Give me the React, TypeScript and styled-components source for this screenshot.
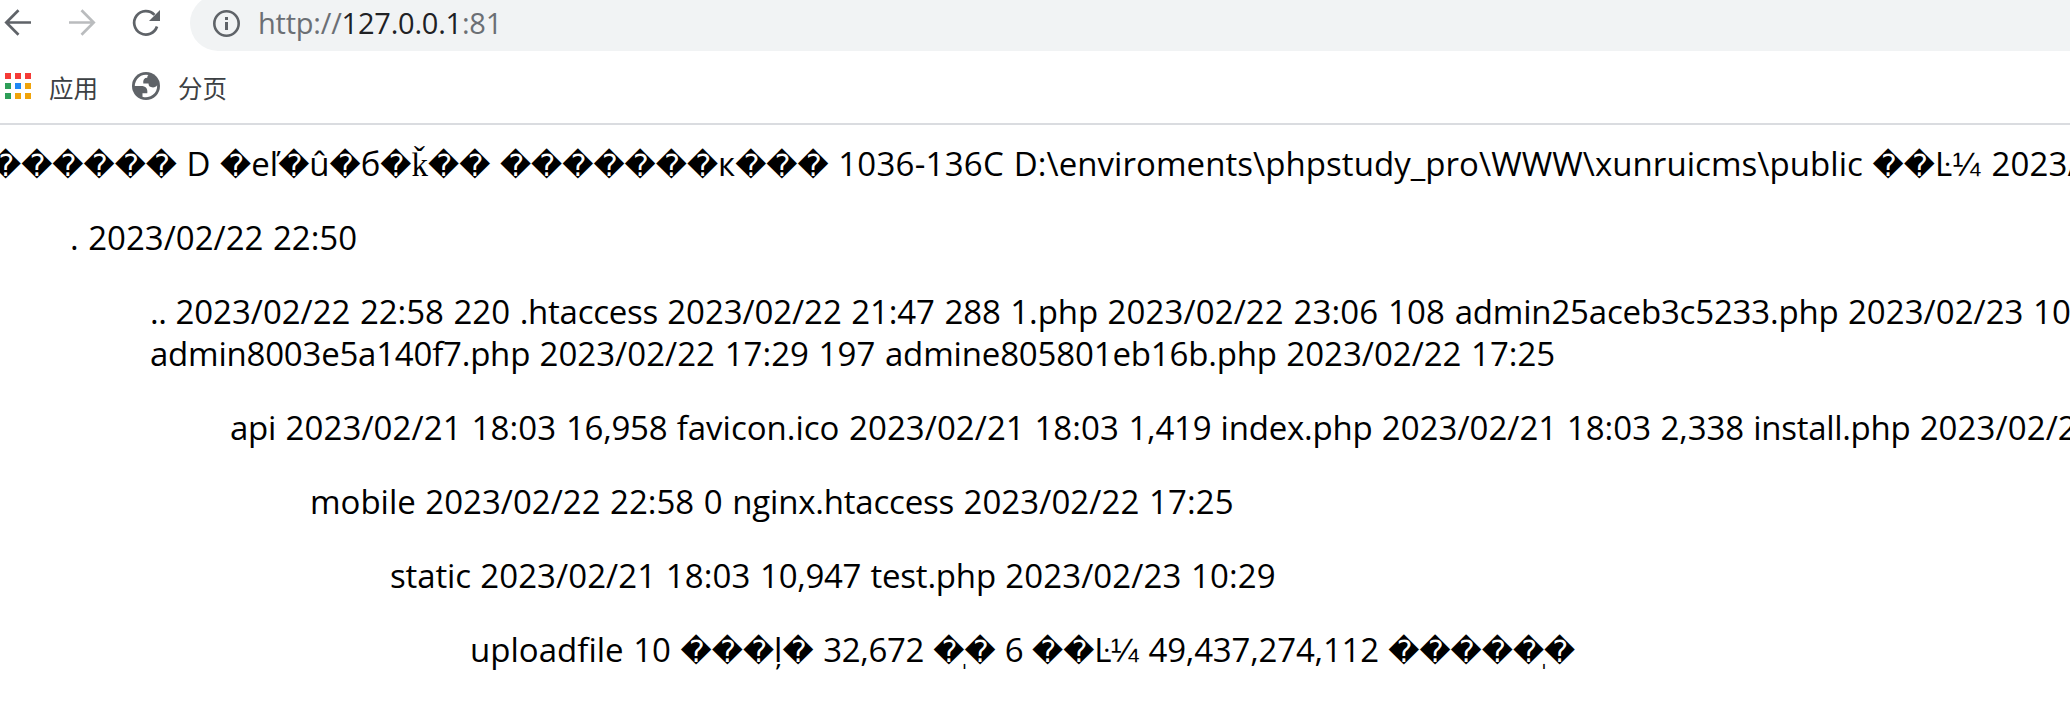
import React from "react";
import styled, { createGlobalStyle } from "styled-components";

const GlobalStyle = createGlobalStyle`
  body { margin: 0; background: #fff; overflow: hidden; }
`;

const Window = styled.div`
  width: 100vw;
  height: 723px;
  overflow: hidden;
  background: #fff;
  font-family: "Open Sans", "Noto Sans CJK SC", sans-serif;
`;

const Toolbar = styled.header`
  display: flex;
  align-items: flex-start;
  height: 51px;
`;

const NavButtons = styled.div`
  display: flex;
  flex: 0 0 190px;
  height: 51px;
`;

const Icon = styled.svg`
  display: block;
  flex: none;
  overflow: visible;
`;

const AddressBar = styled.div`
  display: flex;
  align-items: center;
  flex: 1;
  height: 56px;
  margin-top: -5px;
  box-sizing: border-box;
  padding-left: 23px;
  border-radius: 28px 0 0 28px;
  background: #f1f3f4;
`;

const Url = styled.span`
  margin-left: 18px;
  font-size: 29px;
  line-height: 40px;
  letter-spacing: -0.22px;
  color: #6b6f74;
  white-space: nowrap;
`;

const Host = styled.span`
  color: #202124;
`;

const Bookmarks = styled.nav`
  display: flex;
  align-items: center;
  box-sizing: border-box;
  height: 74px;
  padding: 0 0 2px 5px;
  border-bottom: 2px solid #dadce0;
`;

const Bookmark = styled.div`
  display: flex;
  align-items: center;
  gap: 18px;
  margin-right: 34px;
`;

const BookmarkLabel = styled.span`
  padding-top: 3px;
  font-family: "Noto Sans CJK SC", sans-serif;
  font-size: 24.5px;
  line-height: 36px;
  color: #3c4043;
`;

const Listing = styled.main`
  margin: 18px 0 0 -10px;
  font-size: 33px;
  line-height: 42px;
  word-spacing: 1px;
  color: #000;
  white-space: nowrap;
`;

const Entry = styled.div<{ $level: number }>`
  margin: 0 0 32px ${(p) => p.$level * 80}px;
`;

const Line = styled.div`
  height: 42px;
`;

const Run = styled.span<{ $track: number }>`
  letter-spacing: ${(p) => p.$track}px;
`;

const Unknown = styled.span`
  font-family: "DejaVu Sans", sans-serif;
  font-size: 30.4px;
  line-height: 1;
  letter-spacing: 0;
`;

const Serif = styled.span`
  font-family: "Liberation Serif", serif;
`;

const Fraction = styled.span`
  font-family: "Liberation Sans", sans-serif;
  line-height: 1;
  letter-spacing: 1px;
`;

type Piece = [text: string, track: number];

const entries: Piece[][][] = [
  [[
    ["������ D �eľ�û�б�ǩ�� �������к��� ", 0],
    ["1036-136C ", 0.25],
    ["D:\\enviroments\\phpstudy_pro\\WWW\\xunruicms\\public ", 0.06],
    ["��Ŀ¼ ", 0.6],
    ["2023/02/22", 0.12],
  ]],
  [[[". 2023/02/22 22:50", 0]]],
  [
    [
      [".. ", -0.5],
      ["2023/02/22 22:58 220 ", -0.02],
      [".htaccess ", -0.25],
      ["2023/02/22 21:47 288 1.php ", -0.08],
      ["2023/02/22 23:06 108 ", 0.12],
      ["admin25aceb3c5233.php ", -0.18],
      ["2023/02/23 10:29", 0.04],
    ],
    [
      ["admin8003e5a140f7.php ", -0.22],
      ["2023/02/22 17:29 197 ", 0.04],
      ["admine805801eb16b.php ", -0.16],
      ["2023/02/22 17:25", 0],
    ],
  ],
  [[
    ["api ", -0.25],
    ["2023/02/21 18:03 ", 0.12],
    ["16,958 ", -0.25],
    ["favicon.ico ", 0],
    ["2023/02/21 18:03 ", 0.06],
    ["1,419 ", -0.25],
    ["index.php ", -0.22],
    ["2023/02/21 18:03 ", 0.02],
    ["2,338 ", -0.15],
    ["install.php ", -0.3],
    ["2023/02/22", 0.1],
  ]],
  [[
    ["mobile ", 0],
    ["2023/02/22 22:58 0 ", 0],
    ["nginx.htaccess ", -0.2],
    ["2023/02/22 17:25", 0.08],
  ]],
  [[
    ["static ", -0.15],
    ["2023/02/21 18:03 ", 0.08],
    ["10,947 ", -0.3],
    ["test.php ", -0.2],
    ["2023/02/23 10:29", 0.1],
  ]],
  [[
    ["uploadfile 10 ", 0.02],
    ["���ļ� ", 0],
    ["32,672 �ֽ� ", -0.35],
    ["6 ��Ŀ¼ ", -0.6],
    ["49,437,274,112 ", -0.2],
    ["�����ֽ�", 0],
  ]],
];

const renderText = (text: string) =>
  text.split(/(\uFFFD+|\u01E9|\u00BC)/).map((part, i) => {
    if (part.startsWith("\uFFFD")) return <Unknown key={i}>{part}</Unknown>;
    if (part === "\u01E9") return <Serif key={i}>{part}</Serif>;
    if (part === "\u00BC") return <Fraction key={i}>{part}</Fraction>;
    return part;
  });

const appColors = [
  "#f53b36", "#f53b36", "#f53b36",
  "#2f9e58", "#1e88f5", "#f0a30a",
  "#2f9e58", "#f0a30a", "#f0a30a",
];

export default function App() {
  return (
    <Window>
      <GlobalStyle />
      <Toolbar>
        <NavButtons>
          <Icon width="190" height="51" viewBox="0 0 190 51" fill="none" strokeWidth="2.7">
            <path d="M31 22.5H6.5M18.5 10.3L6.3 22.5L18.5 34.7" stroke="#5f6368" />
            <path d="M69 22.5H93.5M81.5 10.3L93.7 22.5L81.500 34.7" stroke="#babcbe" />
            <path d="M157 26.5A11.7 11.7 0 1 1 154.5 14.9" stroke="#5f6368" />
            <path d="M160 10V21H149Z" fill="#5f6368" />
          </Icon>
        </NavButtons>
        <AddressBar>
          <Icon width="27" height="27" viewBox="0 0 27 27">
            <circle cx="13.5" cy="13.5" r="12.2" fill="none" stroke="#5f6368" strokeWidth="2.6" />
            <path d="M12 7h3v3h-3zM12 12h3v8h-3z" fill="#5f6368" />
          </Icon>
          <Url>http://<Host>127.0.0.1</Host>:81</Url>
        </AddressBar>
      </Toolbar>
      <Bookmarks>
        <Bookmark>
          <Icon width="26" height="26" viewBox="0 0 26 26">
            {appColors.map((color, i) => (
              <rect key={i} x={(i % 3) * 10} y={Math.floor(i / 3) * 10} width="6" height="6" fill={color} />
            ))}
          </Icon>
          <BookmarkLabel>应用</BookmarkLabel>
        </Bookmark>
        <Bookmark>
          <Icon width="28" height="28" viewBox="2 2 20 20">
            <circle cx="12" cy="12" r="10" fill="#5f6368" />
            <path
              fill="#fff"
              d="M4 12h4.4c3.407.022 4.922 1.73 4.543 5.127H9.488v2.47a8.004 8.004 0 0 0 10.498-8.083C19.327 12.504 18.332 13 17 13c-2.137 0-3.206-.916-3.206-2.75h-3.748c-.274-2.728.683-4.092 2.87-4.092 0-.975.327-1.597.811-1.97A8.004 8.004 0 0 0 4 12z"
            />
          </Icon>
          <BookmarkLabel>分页</BookmarkLabel>
        </Bookmark>
      </Bookmarks>
      <Listing>
        {entries.map((lines, level) => (
          <Entry key={level} $level={level}>
            {lines.map((pieces, i) => (
              <Line key={i}>
                {pieces.map(([text, track], j) => (
                  <Run key={j} $track={track}>{renderText(text)}</Run>
                ))}
              </Line>
            ))}
          </Entry>
        ))}
      </Listing>
    </Window>
  );
}
